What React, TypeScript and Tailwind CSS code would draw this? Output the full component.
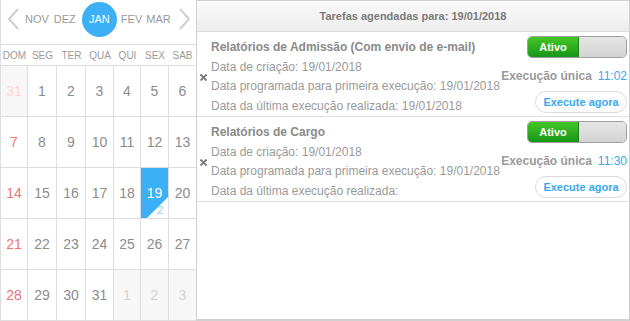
import React from 'react';

type Cell = { n: number; kind: 'prev' | 'cur' | 'next'; selected?: boolean; count?: number };

const weeks: Cell[][] = [
  [{ n: 31, kind: 'prev' }, ...[1, 2, 3, 4, 5, 6].map((n) => ({ n, kind: 'cur' as const }))],
  [7, 8, 9, 10, 11, 12, 13].map((n) => ({ n, kind: 'cur' as const })),
  [14, 15, 16, 17, 18, 19, 20].map((n) => ({ n, kind: 'cur' as const, selected: n === 19, count: n === 19 ? 2 : undefined })),
  [21, 22, 23, 24, 25, 26, 27].map((n) => ({ n, kind: 'cur' as const })),
  [
    ...[28, 29, 30, 31].map((n) => ({ n, kind: 'cur' as const })),
    ...[1, 2, 3].map((n) => ({ n, kind: 'next' as const })),
  ],
];

const weekDays = ['DOM', 'SEG', 'TER', 'QUA', 'QUI', 'SEX', 'SAB'];

const tasks = [
  {
    title: 'Relatórios de Admissão (Com envio de e-mail)',
    created: '19/01/2018',
    first: '19/01/2018',
    last: '19/01/2018',
    time: '11:02',
  },
  {
    title: 'Relatórios de Cargo',
    created: '19/01/2018',
    first: '19/01/2018',
    last: '',
    time: '11:30',
  },
];

function Chevron({ dir }: { dir: 'left' | 'right' }) {
  return (
    <svg width="13" height="22" viewBox="0 0 13 22" className="shrink-0">
      <polyline
        points={dir === 'left' ? '11,1 2,11 11,21' : '2,1 11,11 2,21'}
        fill="none"
        stroke="#cfcfcf"
        strokeWidth="2"
      />
    </svg>
  );
}

function CalendarCell({ cell, col }: { cell: Cell; col: number }) {
  let color = 'text-[#8c8c8c]';
  if (cell.kind === 'prev') color = 'text-[#fcd6d6]';
  else if (cell.kind === 'next') color = 'text-[#d4d4d4]';
  else if (col === 0) color = 'text-[#f07474]';

  const bg = cell.selected ? 'bg-[#3cb0f7]' : cell.kind === 'cur' ? 'bg-white' : 'bg-[#f7f7f7]';

  return (
    <div
      className={`relative h-[51px] flex items-center justify-center border-b border-[#dedede] text-[14px] ${bg} ${
        col < 6 ? 'border-r' : ''
      } ${cell.selected ? 'text-white' : color}`}
    >
      {cell.n}
      {cell.selected && (
        <>
          <svg width="21" height="21" viewBox="0 0 21 21" className="absolute right-0 bottom-0">
            <polygon points="0,21 21,0 21,21" fill="#ffffff" />
          </svg>
          <span className="absolute right-[5px] bottom-[2px] text-[11px] leading-none text-[#8ecff7]">{cell.count}</span>
        </>
      )}
    </div>
  );
}

function Toggle() {
  return (
    <div className="w-[100px] h-[22px] flex rounded-[5px] border border-[#9f9f9f] overflow-hidden">
      <div className="w-[51px] flex items-center justify-center bg-gradient-to-b from-[#44c624] to-[#15961a] text-white text-[11px] font-bold border-r border-[#1d7d1d]">
        Ativo
      </div>
      <div className="flex-1 bg-gradient-to-b from-[#e6e6e6] to-[#d3d3d3]" />
    </div>
  );
}

function TaskRow({ task }: { task: (typeof tasks)[number] }) {
  return (
    <div className="h-[85px] flex border-b border-[#dedede]">
      <div className="w-[14px] pl-[3px] pt-[42px]">
        <svg width="7" height="7" viewBox="0 0 7 7">
          <line x1="0.5" y1="0.5" x2="6.5" y2="6.5" stroke="#777" strokeWidth="1.8" />
          <line x1="6.5" y1="0.5" x2="0.5" y2="6.5" stroke="#777" strokeWidth="1.8" />
        </svg>
      </div>
      <div className="flex-1 pt-[6px] text-[12px] leading-[19.5px] text-[#9a9a9a]">
        <div className="font-bold text-[#8a8a8a]">{task.title}</div>
        <div>Data de criação: {task.created}</div>
        <div>Data programada para primeira execução: {task.first}</div>
        <div>Data da última execução realizada: {task.last}</div>
      </div>
      <div className="flex flex-col items-end pt-[4px] pr-[2px]">
        <Toggle />
        <div className="mt-[10px] leading-[16px] text-[12px] whitespace-nowrap">
          <span className="font-bold text-[#9a9a9a]">Execução única</span>
          <span className="ml-[6px] text-[#3aa7ef]">{task.time}</span>
        </div>
        <button className="mt-[7px] w-[92px] h-[22px] rounded-full border border-[#dcdcdc] bg-white text-[11px] font-bold text-[#3aa7ef]">
          Execute agora
        </button>
      </div>
    </div>
  );
}

export default function App() {
  return (
    <div className="w-[630px] h-[321px] flex bg-white overflow-hidden" style={{ fontFamily: '"Liberation Sans", Arial, sans-serif' }}>
      <div className="w-[196px] shrink-0 border-l border-[#dedede] flex flex-col">
        <div className="h-[45px] border-b border-[#dedede] flex items-center pb-[6px] pl-[6px] text-[11px] text-[#9a9a9a]">
          <Chevron dir="left" />
          <span className="ml-[5px]">NOV</span>
          <span className="ml-[5px]">DEZ</span>
          <span className="ml-[6px] w-[35px] h-[35px] rounded-full bg-[#3cb0f7] text-white flex items-center justify-center">JAN</span>
          <span className="ml-[4px]">FEV</span>
          <span className="ml-[4px]">MAR</span>
          <span className="ml-[7px]">
            <Chevron dir="right" />
          </span>
        </div>
        <div className="h-[21px] border-b border-[#dedede] grid grid-cols-[27px_29px_29px_28px_27px_28px_27px] items-center text-[10px] text-[#9a9a9a]">
          {weekDays.map((d) => (
            <div key={d} className="text-center">
              {d}
            </div>
          ))}
        </div>
        <div className="grid grid-cols-[27px_29px_29px_28px_27px_28px_27px]">
          {weeks.map((w, wi) =>
            w.map((cell, ci) => <CalendarCell key={`${wi}-${ci}`} cell={cell} col={ci} />)
          )}
        </div>
      </div>
      <div className="flex-1 flex flex-col border-l border-t border-r border-b-2 border-[#d0d0d0]">
        <div className="h-[31px] shrink-0 border-b border-[#dedede] bg-gradient-to-b from-[#fafafa] to-[#ededed] flex items-center justify-center text-[11px] font-bold text-[#7a7a7a]">
          Tarefas agendadas para: 19/01/2018
        </div>
        {tasks.map((t) => (
          <TaskRow key={t.title} task={t} />
        ))}
      </div>
    </div>
  );
}
